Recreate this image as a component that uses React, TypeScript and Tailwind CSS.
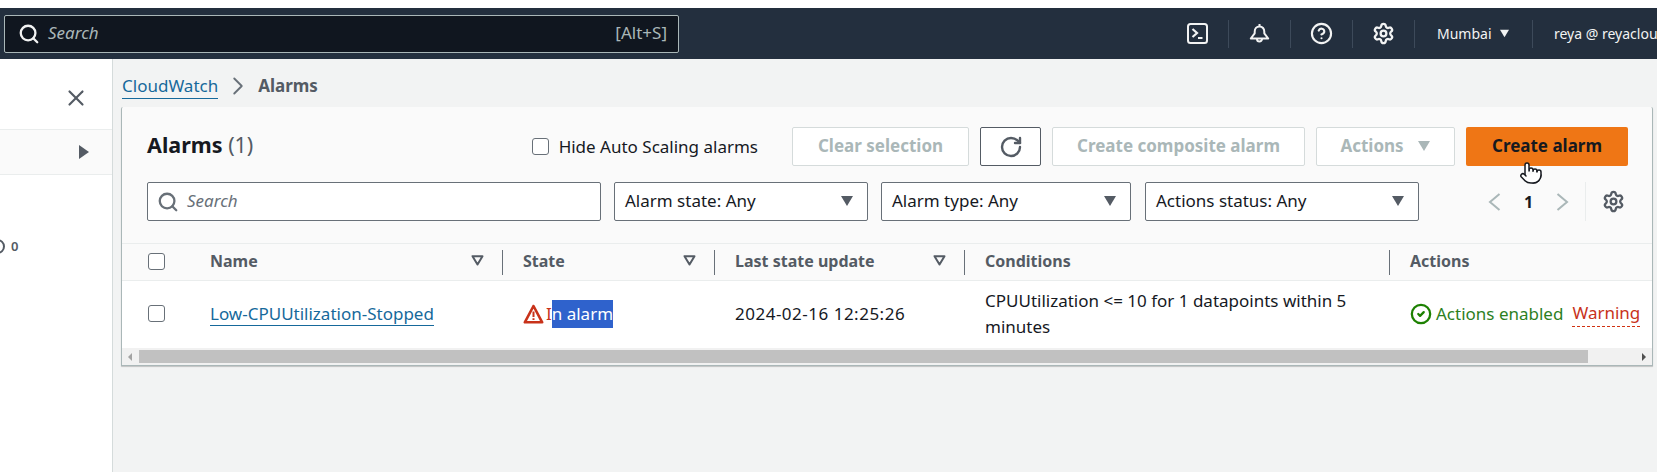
import { ChevronRight, CircleCheck, CircleHelp, Pointer, RotateCw, Search, Settings, X } from "lucide-react";

const font = "font-['Noto_Sans',sans-serif]";

function Caret({ className = "" }: { className?: string }) {
  return (
    <svg width="14" height="12" viewBox="0 0 14 12" className={className}>
      <path d="M1 1h12L7 11z" fill="currentColor" />
    </svg>
  );
}

function SortIcon() {
  return (
    <svg width="13" height="11" viewBox="0 0 13 11" className="text-[#545b64]">
      <path d="M1.5 1.2h10L6.5 9.5z" fill="none" stroke="currentColor" strokeWidth="2" strokeLinejoin="round" />
    </svg>
  );
}

function TerminalIcon() {
  return (
    <svg width="21" height="21" viewBox="0 0 21 21" fill="none" stroke="currentColor" strokeWidth="2">
      <rect x="1" y="1" width="19" height="19" rx="2.5" />
      <path d="M5.5 6l4.5 4-4.5 4" strokeWidth="2.2" />
      <path d="M11 15h4.5" />
    </svg>
  );
}

function BellIcon() {
  return (
    <svg width="21" height="21" viewBox="0 0 21 21" fill="none" stroke="currentColor" strokeWidth="2" strokeLinejoin="round">
      <path d="M10.5 1v2.5" />
      <path d="M10.5 3.5c-3 0-4.8 2.3-4.8 5.2v1.6L1.8 15.5h17.4l-3.9-5.2V8.7c0-2.9-1.8-5.2-4.8-5.2z" />
      <path d="M8 16a2.5 2.5 0 0 0 5 0" />
    </svg>
  );
}

function NavIcon({ children }: { children: React.ReactNode }) {
  return (
    <div className="flex h-[28px] w-[62px] shrink-0 items-center justify-center border-r border-[#3d4a5a]">
      {children}
    </div>
  );
}

function TopNav() {
  return (
    <div className="flex h-[51px] items-center bg-[#232f3e] text-[#f2f3f3]">
      <div className="ml-[4px] flex h-[38px] w-[675px] shrink-0 items-center rounded-[2px] border border-[#aab7b8] bg-[#10161f] pl-[13px] pr-[11px]">
        <Search size={22} strokeWidth={2.5} className="text-[#f2f3f3]" />
        <span className="ml-[8px] pb-[1px] text-[17px] italic text-[#aab7b8]">Search</span>
        <span className="ml-auto pb-[1px] text-[17px] text-[#aab7b8]">[Alt+S]</span>
      </div>
      <div className="ml-[488px] flex shrink-0 items-center">
        <NavIcon><TerminalIcon /></NavIcon>
        <NavIcon><BellIcon /></NavIcon>
        <NavIcon><CircleHelp size={23} strokeWidth={2.2} /></NavIcon>
        <NavIcon><Settings size={23} strokeWidth={2.4} /></NavIcon>
      </div>
      <div className="flex h-[28px] w-[118px] shrink-0 items-center border-r border-[#3d4a5a] pl-[22px] text-[14px]">
        Mumbai
        <Caret className="ml-[7px] h-[9px] w-[11px]" />
      </div>
      <span className="ml-[21px] shrink-0 whitespace-nowrap text-[14px]">reya @ reyacloud</span>
    </div>
  );
}

function Sidebar() {
  return (
    <div className="relative h-[413px] w-[113px] shrink-0 border-r border-[#d5dbdb] bg-white">
      <div className="flex h-[70px] items-start justify-end pr-[23px] pt-[26px]">
        <X size={26} strokeWidth={2} className="text-[#545b64]" />
      </div>
      <div className="flex h-[46px] items-center justify-end border-y border-[#eaeded] bg-[#fafafa] pr-[23px]">
        <svg width="10" height="14" viewBox="0 0 10 14" className="text-[#545b64]"><path d="M0 0l10 7-10 7z" fill="currentColor" /></svg>
      </div>
      <div className="mt-[62px] flex items-center text-[13px] font-semibold text-[#545b64]">
        <span className="-ml-[10px] h-[15px] w-[15px] rounded-full border-2 border-[#545b64]" />
        <span className="ml-[6px]">0</span>
      </div>
    </div>
  );
}

function GhostButton({ children, width }: { children: React.ReactNode; width: string }) {
  return (
    <div className={`flex h-[39px] ${width} items-center justify-center rounded-[2px] border border-[#d5dbdb] bg-white pb-[1px] text-[17px] font-bold text-[#aab7b8]`}>
      {children}
    </div>
  );
}

function Select({ label, width }: { label: string; width: string }) {
  return (
    <div className={`flex h-[39px] ${width} shrink-0 items-center justify-between rounded-[2px] border border-[#687078] bg-white pb-[1px] pl-[10px] pr-[13px] text-[17px] text-[#16191f]`}>
      {label}
      <Caret className="text-[#545b64]" />
    </div>
  );
}

function Th({ children, sort = false, border = true }: { children?: React.ReactNode; sort?: boolean; border?: boolean }) {
  return (
    <div className="flex h-[36px] items-center py-[6px]">
      <div className={`flex h-[25px] w-full items-center justify-between pb-[3px] pl-[20px] pr-[18px] text-[16px] font-bold text-[#545b64] ${border ? "border-r border-[#687078]" : ""}`}>
        {children}
        {sort && <SortIcon />}
      </div>
    </div>
  );
}

function Checkbox() {
  return <span className="block h-[17px] w-[17px] shrink-0 rounded-[3px] border border-[#687078] bg-white" />;
}

function AlarmsCard() {
  return (
    <div className="mr-[4px] rounded-t-[2px] border-x border-b border-[#aab7b8] bg-[#fafafa] shadow-[0_1px_1px_rgba(0,0,0,0.2)]">
      <div className="flex h-[59px] items-center pl-[25px] pr-[24px] pt-[20px]">
        <h1 className="pb-[2px] text-[21.5px] font-bold text-[#16191f]">
          Alarms <span className="font-normal text-[#545b64]">(1)</span>
        </h1>
        <label className="ml-auto mr-[34px] flex items-center gap-[10px] text-[17px] text-[#16191f]">
          <Checkbox />
          Hide Auto Scaling alarms
        </label>
        <div className="flex items-center gap-[11px]">
          <GhostButton width="w-[177px]">Clear selection</GhostButton>
          <div className="flex h-[39px] w-[61px] items-center justify-center rounded-[2px] border border-[#545b64] bg-white text-[#545b64]">
            <RotateCw size={24} strokeWidth={2.4} />
          </div>
          <GhostButton width="w-[253px]">Create composite alarm</GhostButton>
          <GhostButton width="w-[139px]">
            Actions
            <Caret className="ml-[13px]" />
          </GhostButton>
          <div className="flex h-[39px] w-[162px] items-center justify-center rounded-[2px] bg-[#ef7615] pb-[1px] text-[17px] font-bold text-[#16191f]">
            Create alarm
          </div>
        </div>
      </div>

      <div className="flex items-center pl-[25px] pr-[24px] pt-[16px]">
        <div className="flex h-[39px] w-[454px] shrink-0 items-center rounded-[2px] border border-[#687078] bg-white pl-[9px]">
          <Search size={22} strokeWidth={2.5} className="text-[#687078]" />
          <span className="ml-[8px] pb-[1px] text-[17px] italic text-[#687078]">Search</span>
        </div>
        <div className="ml-[13px] flex gap-[13px]">
          <Select label="Alarm state: Any" width="w-[254px]" />
          <Select label="Alarm type: Any" width="w-[250px]" />
        </div>
        <div className="ml-[14px]">
          <Select label="Actions status: Any" width="w-[274px]" />
        </div>
        <div className="ml-[69px] flex items-center text-[#aab7b8]">
          <svg width="13" height="18" viewBox="0 0 13 18" fill="none" stroke="currentColor" strokeWidth="2"><path d="M11.5 1L2 9l9.5 8" /></svg>
          <span className="mx-[23px] text-[16px] font-bold text-[#16191f]">1</span>
          <svg width="13" height="18" viewBox="0 0 13 18" fill="none" stroke="currentColor" strokeWidth="2"><path d="M1.5 1L11 9l-9.5 8" /></svg>
          <div className="ml-[16px] flex h-[39px] items-center border-l border-[#eaeded] pl-[16px] text-[#545b64]">
            <Settings size={23} strokeWidth={2.4} />
          </div>
        </div>
      </div>

      <div className="mt-[22px] grid grid-cols-[68px_313px_212px_250px_425px_1fr] border-y border-[#eaeded] bg-[#fafafa]">
        <div className="flex h-[36px] items-center pb-[1px] pl-[26px]"><Checkbox /></div>
        <Th sort>Name</Th>
        <Th sort>State</Th>
        <Th sort>Last state update</Th>
        <Th>Conditions</Th>
        <Th border={false}>Actions</Th>
      </div>

      <div className="grid h-[67px] grid-cols-[68px_313px_212px_250px_425px_1fr] items-center bg-white pb-[2px] text-[17px] text-[#16191f]">
        <div className="pl-[26px]"><Checkbox /></div>
        <div className="pl-[20px]">
          <a className="border-b border-[#16699b] text-[#16699b]">Low-CPUUtilization-Stopped</a>
        </div>
        <div className="flex items-center pl-[20px] text-[#c8321a]">
          <svg width="21" height="20" viewBox="0 0 21 20" fill="none" stroke="currentColor" strokeWidth="2.6" strokeLinejoin="round">
            <path d="M10.5 2L1.8 18.3h17.4z" />
            <path d="M10.5 7.5v5.5M10.5 14.3v1.8" strokeWidth="2" />
          </svg>
          <span className="ml-[2px] leading-[28px]">I</span>
          <span className="bg-[#2f62cc] leading-[28px] text-white">n alarm</span>
        </div>
        <div className="pl-[20px] tracking-[0.5px]">2024-02-16 12:25:26</div>
        <div className="pl-[20px] leading-[26px]">CPUUtilization &lt;= 10 for 1 datapoints within 5 minutes</div>
        <div className="flex items-center whitespace-nowrap pl-[20px]">
          <CircleCheck size={22} strokeWidth={2.5} className="text-[#1d8102]" />
          <span className="ml-[4px] text-[#2d7f1f]">Actions enabled</span>
          <span className="ml-[9px] border-b border-dashed border-[#d13212] text-[#c8321a]">Warning</span>
        </div>
      </div>

      <div className="flex h-[17px] items-center bg-[#f1f1f1]">
        <svg width="17" height="10" viewBox="0 0 17 10" className="text-[#a3a3a3]"><path d="M10 1v8L6 5z" fill="currentColor" /></svg>
        <div className="h-[13px] w-[1449px] bg-[#c1c1c1]" />
        <svg width="17" height="10" viewBox="0 0 17 10" className="ml-auto text-[#505050]"><path d="M7 1v8l4-4z" fill="currentColor" /></svg>
      </div>
    </div>
  );
}

export default function App() {
  return (
    <div className={`relative h-[472px] w-[1657px] overflow-hidden bg-white ${font}`}>
      <div className="h-[8px]" />
      <TopNav />
      <div className="flex">
        <Sidebar />
        <main className="min-w-0 flex-1 bg-[#f2f3f3] pl-[8px]">
          <div className="flex h-[48px] items-center pl-[1px] pt-[6px] text-[17px]">
            <a className="border-b border-[#16699b] text-[#16699b]">CloudWatch</a>
            <ChevronRight size={30} strokeWidth={1.5} className="mx-[5px] text-[#687078]" />
            <span className="font-bold text-[#545b64]">Alarms</span>
          </div>
          <AlarmsCard />
        </main>
      </div>
      {/* mouse pointer sitting over the Create alarm button */}
      <Pointer size={24} fill="white" strokeWidth={1.5} className="absolute left-[1519px] top-[161px] text-[#16191f]" />
    </div>
  );
}
